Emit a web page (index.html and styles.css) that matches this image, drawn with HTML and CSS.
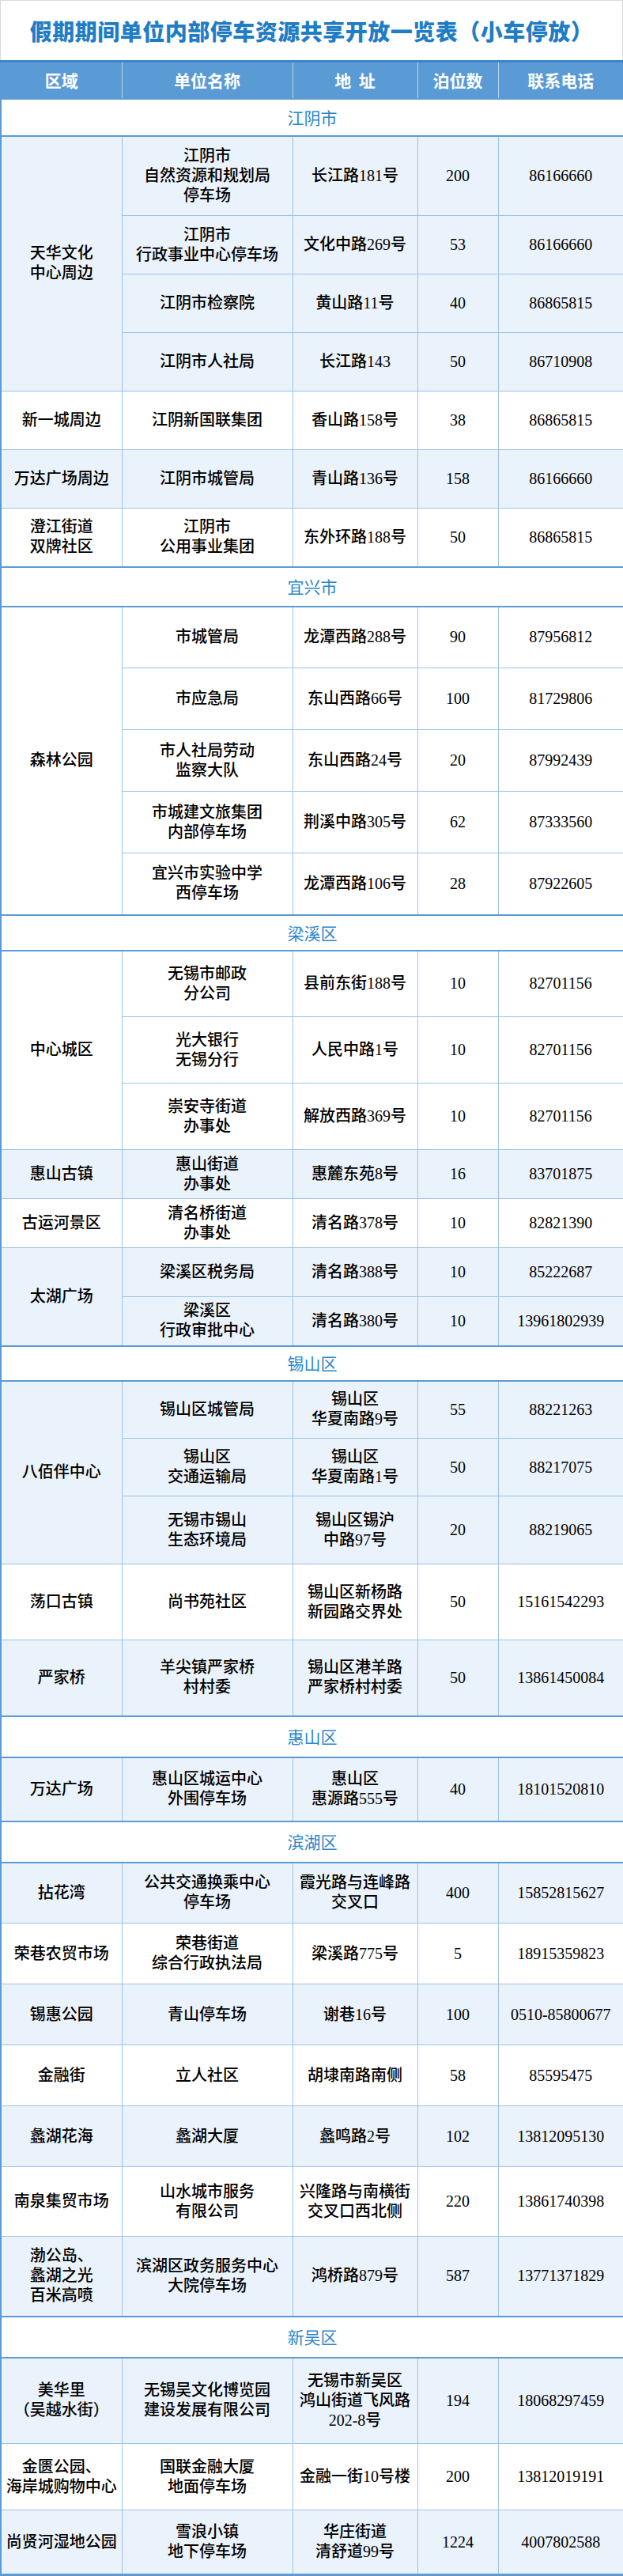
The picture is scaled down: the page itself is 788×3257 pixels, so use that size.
FILE: index.html
```html
<!DOCTYPE html>
<html lang="zh-CN">
<head>
<meta charset="utf-8">
<title>假期期间单位内部停车资源共享开放一览表</title>
<link rel="stylesheet" href="styles.css">
</head>
<body>
<div class="page">
  <header class="title-bar">
    <h1 class="title">假期期间单位内部停车资源共享开放一览表（小车停放）</h1>
  </header>
  <table class="sheet">
    <colgroup>
      <col class="c-area"><col class="c-name"><col class="c-addr"><col class="c-num"><col class="c-tel">
    </colgroup>
    <thead>
      <tr class="head h47"><th>区域</th><th>单位名称</th><th>地&nbsp;&nbsp;址</th><th>泊位数</th><th>联系电话</th></tr>
    </thead>
    <tbody>
      <tr class="sec h47"><td colspan="5">江阴市</td></tr>
      <tr class="alt h101"><td rowspan="4" class="area">天华文化<br>中心周边</td><td>江阴市<br>自然资源和规划局<br>停车场</td><td>长江路181号</td><td>200</td><td>86166660</td></tr>
      <tr class="alt h74"><td>江阴市<br>行政事业中心停车场</td><td>文化中路269号</td><td>53</td><td>86166660</td></tr>
      <tr class="alt h74"><td>江阴市检察院</td><td>黄山路11号</td><td>40</td><td>86865815</td></tr>
      <tr class="alt h74"><td>江阴市人社局</td><td>长江路143</td><td>50</td><td>86710908</td></tr>
      <tr class="h74"><td class="area">新一城周边</td><td>江阴新国联集团</td><td>香山路158号</td><td>38</td><td>86865815</td></tr>
      <tr class="alt h74"><td class="area">万达广场周边</td><td>江阴市城管局</td><td>青山路136号</td><td>158</td><td>86166660</td></tr>
      <tr class="h74"><td class="area">澄江街道<br>双牌社区</td><td>江阴市<br>公用事业集团</td><td>东外环路188号</td><td>50</td><td>86865815</td></tr>

      <tr class="sec h50"><td colspan="5">宜兴市</td></tr>
      <tr class="h78"><td rowspan="5" class="area">森林公园</td><td>市城管局</td><td>龙潭西路288号</td><td>90</td><td>87956812</td></tr>
      <tr class="h78"><td>市应急局</td><td>东山西路66号</td><td>100</td><td>81729806</td></tr>
      <tr class="h78"><td>市人社局劳动<br>监察大队</td><td>东山西路24号</td><td>20</td><td>87992439</td></tr>
      <tr class="h78"><td>市城建文旅集团<br>内部停车场</td><td>荆溪中路305号</td><td>62</td><td>87333560</td></tr>
      <tr class="h78"><td>宜兴市实验中学<br>西停车场</td><td>龙潭西路106号</td><td>28</td><td>87922605</td></tr>

      <tr class="sec h45"><td colspan="5">梁溪区</td></tr>
      <tr class="h84"><td rowspan="3" class="area">中心城区</td><td>无锡市邮政<br>分公司</td><td>县前东街188号</td><td>10</td><td>82701156</td></tr>
      <tr class="h84"><td>光大银行<br>无锡分行</td><td>人民中路1号</td><td>10</td><td>82701156</td></tr>
      <tr class="h84"><td>崇安寺街道<br>办事处</td><td>解放西路369号</td><td>10</td><td>82701156</td></tr>
      <tr class="alt h62"><td class="area">惠山古镇</td><td>惠山街道<br>办事处</td><td>惠麓东苑8号</td><td>16</td><td>83701875</td></tr>
      <tr class="h62"><td class="area">古运河景区</td><td>清名桥街道<br>办事处</td><td>清名路378号</td><td>10</td><td>82821390</td></tr>
      <tr class="alt h62"><td rowspan="2" class="area">太湖广场</td><td>梁溪区税务局</td><td>清名路388号</td><td>10</td><td>85222687</td></tr>
      <tr class="alt h62"><td>梁溪区<br>行政审批中心</td><td>清名路380号</td><td>10</td><td>13961802939</td></tr>

      <tr class="sec h44"><td colspan="5">锡山区</td></tr>
      <tr class="alt h73"><td rowspan="3" class="area">八佰伴中心</td><td>锡山区城管局</td><td>锡山区<br>华夏南路9号</td><td>55</td><td>88221263</td></tr>
      <tr class="alt h73"><td>锡山区<br>交通运输局</td><td>锡山区<br>华夏南路1号</td><td>50</td><td>88217075</td></tr>
      <tr class="alt h86"><td>无锡市锡山<br>生态环境局</td><td>锡山区锡沪<br>中路97号</td><td>20</td><td>88219065</td></tr>
      <tr class="h96"><td class="area">荡口古镇</td><td>尚书苑社区</td><td>锡山区新杨路<br>新园路交界处</td><td>50</td><td>15161542293</td></tr>
      <tr class="alt h96"><td class="area">严家桥</td><td>羊尖镇严家桥<br>村村委</td><td>锡山区港羊路<br>严家桥村村委</td><td>50</td><td>13861450084</td></tr>

      <tr class="sec h52"><td colspan="5">惠山区</td></tr>
      <tr class="alt h81"><td class="area">万达广场</td><td>惠山区城运中心<br>外围停车场</td><td>惠山区<br>惠源路555号</td><td>40</td><td>18101520810</td></tr>

      <tr class="sec h52"><td colspan="5">滨湖区</td></tr>
      <tr class="alt h77"><td class="area">拈花湾</td><td>公共交通换乘中心<br>停车场</td><td>霞光路与连峰路<br>交叉口</td><td>400</td><td>15852815627</td></tr>
      <tr class="h77"><td class="area">荣巷农贸市场</td><td>荣巷街道<br>综合行政执法局</td><td>梁溪路775号</td><td>5</td><td>18915359823</td></tr>
      <tr class="alt h77"><td class="area">锡惠公园</td><td>青山停车场</td><td>谢巷16号</td><td>100</td><td>0510-85800677</td></tr>
      <tr class="h77"><td class="area">金融街</td><td>立人社区</td><td>胡埭南路南侧</td><td>58</td><td>85595475</td></tr>
      <tr class="alt h77"><td class="area">蠡湖花海</td><td>蠡湖大厦</td><td>蠡鸣路2号</td><td>102</td><td>13812095130</td></tr>
      <tr class="h88"><td class="area">南泉集贸市场</td><td>山水城市服务<br>有限公司</td><td>兴隆路与南横街<br>交叉口西北侧</td><td>220</td><td>13861740398</td></tr>
      <tr class="alt h101"><td class="area">渤公岛、<br>蠡湖之光<br>百米高喷</td><td>滨湖区政务服务中心<br>大院停车场</td><td>鸿桥路879号</td><td>587</td><td>13771371829</td></tr>

      <tr class="sec h52"><td colspan="5">新吴区</td></tr>
      <tr class="alt h109"><td class="area">美华里<br>（吴越水街）</td><td>无锡吴文化博览园<br>建设发展有限公司</td><td>无锡市新吴区<br>鸿山街道飞风路<br>202-8号</td><td>194</td><td>18068297459</td></tr>
      <tr class="h84"><td class="area">金匮公园、<br>海岸城购物中心</td><td>国联金融大厦<br>地面停车场</td><td>金融一街10号楼</td><td>200</td><td>13812019191</td></tr>
      <tr class="alt h82"><td class="area">尚贤河湿地公园</td><td>雪浪小镇<br>地下停车场</td><td>华庄街道<br>清舒道99号</td><td>1224</td><td>4007802588</td></tr>
    </tbody>
  </table>
</div>
</body>
</html>
```

FILE: styles.css
```css
html, body {
  margin: 0;
  padding: 0;
  background: #ffffff;
}

.page {
  width: 788px;
  font-family: "Liberation Serif", "Noto Sans CJK SC", serif;
  color: #000000;
}

.title-bar {
  height: 76px;
  box-sizing: border-box;
  border-top: 1px solid #d9d9d9;
  border-left: 1px solid #d9d9d9;
  border-right: 1px solid #d9d9d9;
  display: flex;
  align-items: center;
  justify-content: center;
}

.title {
  margin: 0;
  font-family: "Noto Sans CJK SC", sans-serif;
  font-weight: 900;
  font-size: 28px;
  letter-spacing: 0.5px;
  color: #1f7dc6;
  white-space: nowrap;
}

.sheet {
  width: 788px;
  table-layout: fixed;
  border-collapse: collapse;
  border-left: 2px solid #5b9bd5;
  border-right: 2px solid #5b9bd5;
  border-bottom: 3px solid #5b9bd5;
}

.c-area { width: 153px; }
.c-name { width: 216px; }
.c-addr { width: 158px; }
.c-num  { width: 102px; }
.c-tel  { width: 159px; }

.sheet th,
.sheet td {
  padding: 0;
  text-align: center;
  vertical-align: middle;
  font-size: 20px;
  line-height: 25px;
  font-weight: 500;
  border: 1px solid #9dc3e6;
  white-space: nowrap;
}

.head th {
  background: #5b9bd5;
  color: #ffffff;
  font-family: "Noto Sans CJK SC", sans-serif;
  font-weight: 700;
  font-size: 21px;
  border-top: 3px solid #3f85cc;
  border-bottom: 2px solid #5b9bd5;
  border-left: 1px solid #bcd6ef;
  border-right: 1px solid #bcd6ef;
}

.sec td {
  background: #ffffff;
  color: #2a86cb;
  font-family: "Noto Sans CJK SC", sans-serif;
  font-weight: 400;
  font-size: 21px;
  border-top: 2px solid #5b9bd5;
  border-bottom: 2px solid #5b9bd5;
}

.alt td {
  background: #eaf2fb;
}

.h44 { height: 44px; }
.h45 { height: 45px; }
.h47 { height: 47px; }
.h50 { height: 50px; }
.h52 { height: 52px; }
.h62 { height: 62px; }
.h73 { height: 73px; }
.h74 { height: 74px; }
.h77 { height: 77px; }
.h78 { height: 78px; }
.h81 { height: 81px; }
.h82 { height: 82px; }
.h84 { height: 84px; }
.h86 { height: 86px; }
.h88 { height: 88px; }
.h96 { height: 96px; }
.h101 { height: 101px; }
.h109 { height: 109px; }
```
